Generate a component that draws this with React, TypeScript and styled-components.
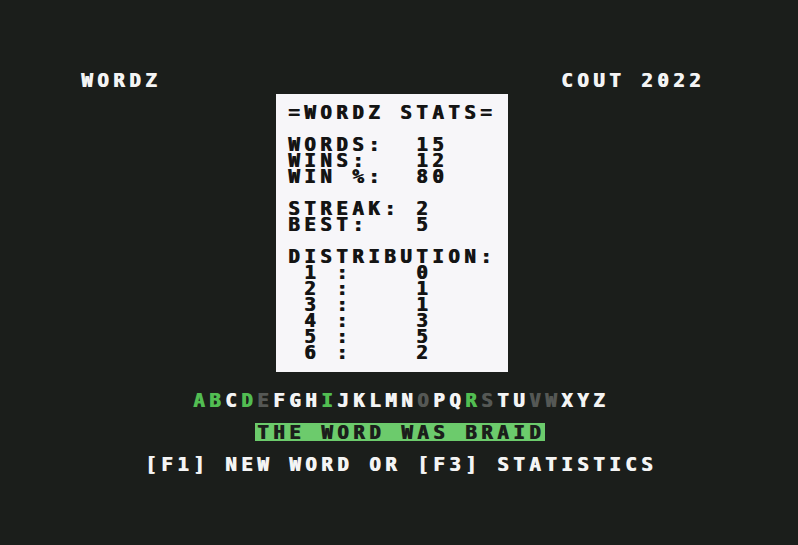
import React from "react";
import { styled, createGlobalStyle } from "styled-components";

const CELL = 16;

const GlobalStyle = createGlobalStyle`
  html, body {
    margin: 0;
    padding: 0;
    background: #1b1e1b;
  }
`;

type LetterState = "hit" | "miss" | "unused";

const LETTERS: [string, LetterState][] = [
  ["A", "hit"], ["B", "hit"], ["C", "unused"], ["D", "hit"], ["E", "miss"],
  ["F", "unused"], ["G", "unused"], ["H", "unused"], ["I", "hit"], ["J", "unused"],
  ["K", "unused"], ["L", "unused"], ["M", "unused"], ["N", "unused"], ["O", "miss"],
  ["P", "unused"], ["Q", "unused"], ["R", "hit"], ["S", "miss"], ["T", "unused"],
  ["U", "unused"], ["V", "miss"], ["W", "miss"], ["X", "unused"], ["Y", "unused"],
  ["Z", "unused"],
];

const STAT_LINES = [
  "=WORDZ STATS=",
  "",
  "WORDS:  15",
  "WINS:   12",
  "WIN %:  80",
  "",
  "STREAK: 2",
  "BEST:   5",
  "",
  "DISTRIBUTION:",
  " 1 :    0",
  " 2 :    1",
  " 3 :    1",
  " 4 :    3",
  " 5 :    5",
  " 6 :    2",
];

const App = () => {
  return (
    <>
      <GlobalStyle />
      <Screen>
        <Header>
          <span>WORDZ</span>
          <span>COUT 2022</span>
        </Header>
        <StatsCard>
          {STAT_LINES.map((line, i) => (
            <Line key={i}>{line}</Line>
          ))}
        </StatsCard>
        <Alphabet $col={7}>
          {LETTERS.map(([ch, state]) => (
            <Letter key={ch} $state={state}>
              {ch}
            </Letter>
          ))}
        </Alphabet>
        <Line />
        <Line $col={11}>
          <Highlight>THE WORD WAS BRAID</Highlight>
        </Line>
        <Line />
        <Line $col={4}>[F1] NEW WORD OR [F3] STATISTICS</Line>
      </Screen>
    </>
  );
};

export default App;

const Screen = styled.div`
  width: 798px;
  height: 545px;
  box-sizing: border-box;
  padding: 72px 0 0 81px;
  background: #1b1e1b;
  color: #f4f4f4;
  font-family: "DejaVu Sans Mono", "Liberation Mono", monospace;
  font-weight: bold;
  font-size: 19px;
  line-height: ${CELL}px;
  letter-spacing: calc(${CELL}px - 1ch);
  text-shadow: 1px 0 0 currentColor;
  overflow: hidden;
`;

const Header = styled.div`
  display: flex;
  justify-content: space-between;
  width: ${CELL * 39}px;
  height: ${CELL}px;
`;

const Line = styled.div<{ $col?: number }>`
  height: ${CELL}px;
  white-space: pre;
  padding-left: ${({ $col = 0 }) => $col * CELL}px;
`;

const Alphabet = styled(Line)`
  margin-top: 20px;
`;

const StatsCard = styled.div`
  width: 232px;
  height: 278px;
  box-sizing: border-box;
  margin: 6px 0 0 195px;
  padding: 10px 0 12px 12px;
  background: #f7f6f9;
  color: #141414;
`;

const letterColors: Record<LetterState, string> = {
  hit: "#52bd52",
  miss: "#555855",
  unused: "#f4f4f4",
};

const Letter = styled.span<{ $state: LetterState }>`
  color: ${({ $state }) => letterColors[$state]};
`;

const Highlight = styled.span`
  display: inline-block;
  margin-left: -2px;
  padding: 1px 0 1px 2px;
  margin-top: -1px;
  background: #6ccb6c;
  color: #1b1e1b;
`;
